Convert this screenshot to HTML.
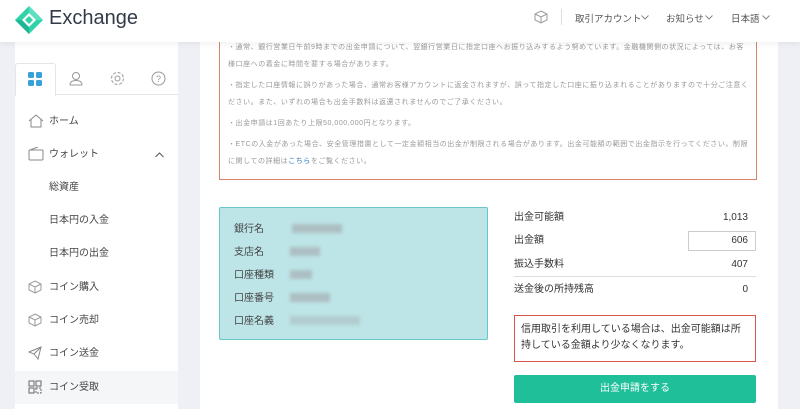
<!DOCTYPE html>
<html><head><meta charset="utf-8"><style>
*{margin:0;padding:0;box-sizing:border-box}
body{width:800px;height:409px;overflow:hidden;background:#eef0f5;font-family:"Liberation Sans","Noto Sans CJK JP",sans-serif;position:relative;color:#333}
.hdr{position:absolute;left:0;top:0;width:800px;height:42px;background:#fff;box-shadow:0 2px 6px rgba(0,0,0,.06);z-index:5}
.logo{position:absolute;left:14px;top:5px}
.brand{position:absolute;left:49px;top:7px;font-size:20px;color:#333a48}
.nav{position:absolute;top:11px;font-size:9.5px;color:#555}
.side{position:absolute;left:15px;top:42px;width:163px;height:367px;background:#fff}
.tabs{position:absolute;left:0;top:21px;width:163px;height:32px;border-bottom:1px solid #e3e5ea}
.tab1{position:absolute;left:0;top:0;width:41px;height:33px;border:1px solid #e3e5ea;border-bottom:none;background:#fff;border-radius:3px 3px 0 0}
.mi{position:absolute;left:0;width:163px;height:33px;font-size:10px;color:#444;line-height:33px}
.mi span{position:absolute;left:34px}
.mi svg{position:absolute;left:13px;top:9px}
.main{position:absolute;left:200px;top:42px;width:578px;height:367px;background:#fff}
.notice{position:absolute;left:19px;top:-5px;width:538px;height:143px;border:1px solid #d9826e;border-top:none;padding:2px 6px 0 8px;font-size:7px;color:#999;line-height:17px;letter-spacing:0.55px}
.notice p{margin-bottom:4px}
.bank{position:absolute;left:19px;top:165px;width:269px;height:133px;background:#bde4e6;border:1px solid #67c7cd;border-radius:2px}
.bank div{position:absolute;left:14px;font-size:10px;color:#444}
.blur{position:absolute;height:9px;background:#a8b6bb;filter:blur(1.5px);opacity:.8}
.row{position:absolute;left:314px;width:242px;height:24px;line-height:24px;font-size:10px;color:#333}
.row b{position:absolute;right:8px;top:0;font-weight:normal}
.warn{position:absolute;left:314px;top:273px;width:242px;height:47px;border:1px solid #d9534f;padding:6px 6px;font-size:10px;line-height:16px;color:#333}
.btn{position:absolute;left:314px;top:333px;width:242px;height:28px;background:#1fbf9a;border-radius:2px;color:#fff;font-size:10px;text-align:center;line-height:28px}
</style></head><body>
<div class="hdr">
<svg class="logo" width="30" height="30" viewBox="0 0 30 30"><polygon points="15,1 29,15 15,29 1,15" fill="#2ed3a8"/><polygon points="15,1 29,15 15,15" fill="#5de0c0"/><polygon points="1,15 15,29 15,15" fill="#1fb597"/><polygon points="15,8 22,15 15,22 8,15" fill="#fff"/><polygon points="15,11 19,15 15,19 11,15" fill="#2ed3a8"/></svg>
<div class="brand">Exchange</div>
<svg style="position:absolute;left:534px;top:10px" width="14" height="14" viewBox="0 0 14 14" fill="none" stroke="#999"><path d="M7 1L13 4V10L7 13L1 10V4Z M1 4L7 7L13 4 M7 7V13"/></svg>
<div style="position:absolute;left:561px;top:9px;width:1px;height:16px;background:#ddd"></div>
<div class="nav" style="left:575px">取引アカウント</div><svg style="position:absolute;left:641px;top:15px" width="8" height="5" fill="none" stroke="#888"><path d="M0.5 0.5L4 4L7.5 0.5"/></svg>
<div class="nav" style="left:666px">お知らせ</div><svg style="position:absolute;left:705px;top:15px" width="8" height="5" fill="none" stroke="#888"><path d="M0.5 0.5L4 4L7.5 0.5"/></svg>
<div class="nav" style="left:731px">日本語</div><svg style="position:absolute;left:762px;top:15px" width="8" height="5" fill="none" stroke="#888"><path d="M0.5 0.5L4 4L7.5 0.5"/></svg>
</div>
<div class="side">
<div class="tabs"><div class="tab1"></div>
<svg style="position:absolute;left:13px;top:9px" width="14" height="14"><rect x="0" y="0" width="6" height="6" rx="1.5" fill="#3aa0dc"/><rect x="8" y="0" width="6" height="6" rx="1.5" fill="#3aa0dc"/><rect x="0" y="8" width="6" height="6" rx="1.5" fill="#3aa0dc"/><rect x="8" y="8" width="6" height="6" rx="1.5" fill="#3aa0dc"/></svg>
<svg style="position:absolute;left:54px;top:8px" width="14" height="15" fill="none" stroke="#999"><circle cx="7" cy="5" r="3.5"/><path d="M1 14Q1 9.5 7 9.5Q13 9.5 13 14Z"/></svg>
<svg style="position:absolute;left:95px;top:8px" width="15" height="15" fill="none" stroke="#999"><circle cx="7.5" cy="7.5" r="2.5"/><circle cx="7.5" cy="7.5" r="6" stroke-dasharray="3 1.7"/></svg>
<svg style="position:absolute;left:136px;top:8px" width="15" height="15" fill="none" stroke="#999"><circle cx="7.5" cy="7.5" r="6.5"/><text x="7.5" y="11" font-size="9" text-anchor="middle" fill="#999" stroke="none">?</text></svg>
</div>
<div class="mi" style="top:63px"><svg width="16" height="14" fill="none" stroke="#888"><path d="M1 7L8 1L15 7M3 5V13H13V5"/></svg><span>ホーム</span></div>
<div class="mi" style="top:96px"><svg width="16" height="14" fill="none" stroke="#888"><rect x="1" y="3" width="14" height="10" rx="1"/><path d="M2 3L10 0"/></svg><span>ウォレット</span><svg style="left:140px;top:14px" width="9" height="6" fill="none" stroke="#555"><path d="M0.5 5L4.5 1L8.5 5"/></svg></div>
<div class="mi" style="top:129px"><span>総資産</span></div>
<div class="mi" style="top:162px"><span>日本円の入金</span></div>
<div class="mi" style="top:195px"><span>日本円の出金</span></div>
<div class="mi" style="top:229px"><svg width="14" height="14" fill="none" stroke="#999"><path d="M7 1L13 4V10L7 13L1 10V4Z M1 4L7 7L13 4 M7 7V13"/></svg><span>コイン購入</span></div>
<div class="mi" style="top:262px"><svg width="14" height="14" fill="none" stroke="#999"><path d="M7 1L13 4V10L7 13L1 10V4Z M1 4L7 7L13 4 M7 7V13"/></svg><span>コイン売却</span></div>
<div class="mi" style="top:295px"><svg width="14" height="14" fill="none" stroke="#888"><path d="M1 6L13 1L10 13L6 8Z M6 8L13 1"/></svg><span>コイン送金</span></div>
<div class="mi" style="top:329px;background:#f5f6f8"><svg width="14" height="14" fill="none" stroke="#666"><rect x="1" y="1" width="5" height="5"/><rect x="8" y="1" width="5" height="5"/><rect x="1" y="8" width="5" height="5"/><path d="M8 8H13V13H8Z" stroke-dasharray="2 1"/></svg><span>コイン受取</span></div>
</div>
<div class="main">
<div class="notice">
<p>・通常、銀行営業日午前9時までの出金申請について、翌銀行営業日に指定口座へお振り込みするよう努めています。金融機関側の状況によっては、お客様口座への着金に時間を要する場合があります。</p>
<p>・指定した口座情報に誤りがあった場合、通常お客様アカウントに返金されますが、誤って指定した口座に振り込まれることがありますので十分ご注意ください。また、いずれの場合も出金手数料は返還されませんのでご了承ください。</p>
<p>・出金申請は1回あたり上限50,000,000円となります。</p>
<p>・ETCの入金があった場合、安全管理措置として一定金額相当の出金が制限される場合があります。出金可能額の範囲で出金指示を行ってください。制限に関しての詳細は<span style="color:#2a7bc0">こちら</span>をご覧ください。</p>
</div>
<div class="bank">
<div style="top:12px">銀行名</div><div style="top:35px">支店名</div><div style="top:58px">口座種類</div><div style="top:81px">口座番号</div><div style="top:104px">口座名義</div>
<span class="blur" style="left:72px;top:16px;width:50px"></span>
<span class="blur" style="left:70px;top:39px;width:30px"></span>
<span class="blur" style="left:70px;top:62px;width:22px"></span>
<span class="blur" style="left:70px;top:85px;width:40px"></span>
<span class="blur" style="left:70px;top:108px;width:70px;opacity:.5"></span>
</div>
<div class="row" style="top:164px">出金可能額<b>1,013</b></div>
<div class="row" style="top:187px">出金額<span style="position:absolute;right:0;top:2px;width:68px;height:20px;border:1px solid #ccc;text-align:right;padding-right:7px;line-height:18px">606</span></div>
<div class="row" style="top:211px;border-bottom:1px solid #ddd">振込手数料<b>407</b></div>
<div class="row" style="top:236px">送金後の所持残高<b>0</b></div>
<div class="warn">信用取引を利用している場合は、出金可能額は所持している金額より少なくなります。</div>
<div class="btn">出金申請をする</div>
</div>
</body></html>
